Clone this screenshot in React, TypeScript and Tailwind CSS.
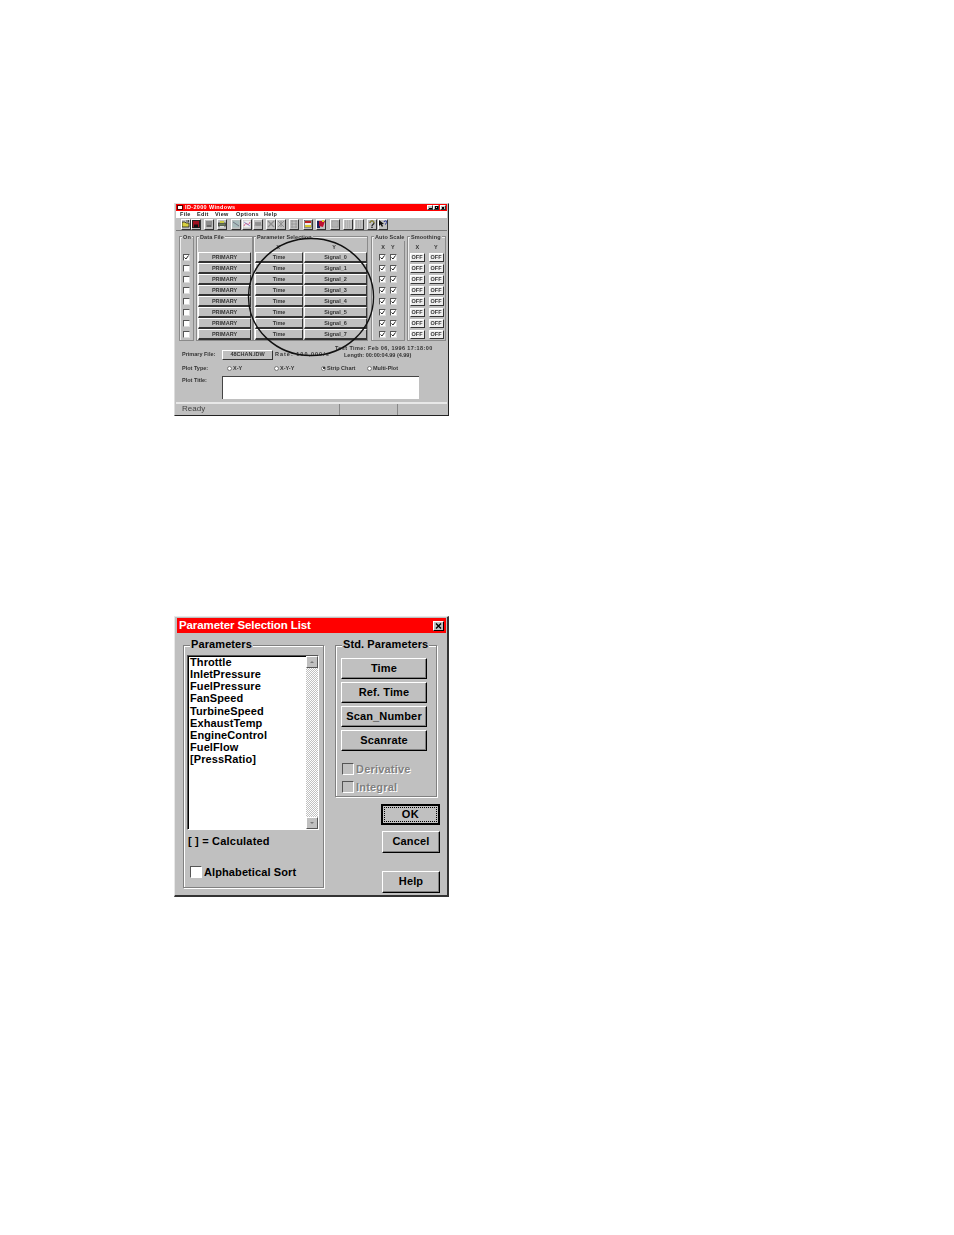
const ui = '[font-family:"Liberation_Sans",Arial,sans-serif]';

const raisedSmall = 'border border-t-white border-l-white border-r-[#333] border-b-[#333] bg-[#c0c0c0]';
const signals = ['Signal_0', 'Signal_1', 'Signal_2', 'Signal_3', 'Signal_4', 'Signal_5', 'Signal_6', 'Signal_7'];
const params = ['Throttle', 'InletPressure', 'FuelPressure', 'FanSpeed', 'TurbineSpeed', 'ExhaustTemp', 'EngineControl', 'FuelFlow', '[PressRatio]'];

const SmallCheck = ({ checked }: { checked?: boolean }) => (
	<div className="w-[7px] h-[7px] bg-white border border-t-[#555] border-l-[#555] border-r-[#ddd] border-b-[#ddd] flex items-center justify-center">
		{checked && (
			<svg width="5" height="5" viewBox="0 0 5 5" className="shrink-0">
				<path d="M0.5 2.5 L2 4 L4.5 0.5" fill="none" stroke="#222" strokeWidth="1" />
			</svg>
		)}
	</div>
);

const SmallGroup = ({ title, className, children }: { title: string; className: string; children?: React.ReactNode }) => (
	<div className={`relative border border-[#8a8a8a] shadow-[inset_1px_1px_0_#eee] ${className}`}>
		<div className="absolute -top-[3px] left-[2px] px-[1px] bg-[#c0c0c0] text-[5.5px] leading-[7px] font-bold tracking-[0.1px] text-[#333] whitespace-nowrap">
			{title}
		</div>
		{children}
	</div>
);

const Radio = ({ label, on, className }: { label: string; on?: boolean; className?: string }) => (
	<div className={`flex items-center gap-[1px] ${className ?? ''}`}>
		<div className="w-[5px] h-[5px] rounded-full bg-white border border-[#777] flex items-center justify-center">
			{on && <div className="w-[2px] h-[2px] rounded-full bg-black" />}
		</div>
		<span>{label}</span>
	</div>
);

const ToolIcon = ({ className, children }: { className?: string; children?: React.ReactNode }) => (
	<div className={`w-[10px] h-[11px] shrink-0 ${raisedSmall} flex items-center justify-center overflow-hidden ${className ?? ''}`}>
		<svg width="8" height="8" viewBox="0 0 8 8">
			{children}
		</svg>
	</div>
);

const Toolbar = () => (
	<div className="h-[13px] flex items-center pl-[5px] border-b border-[#777] bg-[#c0c0c0]">
		<ToolIcon>
			<path d="M0 2 H3 L4 3 H7 V7 H0 Z" fill="#d8d040" stroke="#222" strokeWidth="0.8" />
			<path d="M4 1 L7 1 M6 0 L7 1 L6 2" stroke="#222" strokeWidth="0.7" fill="none" />
		</ToolIcon>
		<ToolIcon>
			<rect x="0.5" y="0.5" width="7" height="7" fill="#a01020" stroke="#222" />
			<rect x="2" y="4.5" width="4" height="3" fill="#111" />
		</ToolIcon>
		<ToolIcon className="ml-[3px]">
			<rect x="1" y="1" width="6" height="6" fill="#8c8c8c" />
			<rect x="2" y="5" width="4" height="2" fill="#666" />
		</ToolIcon>
		<ToolIcon className="ml-[3px]">
			<rect x="0.5" y="3" width="7" height="3" fill="#6c7c60" stroke="#333" strokeWidth="0.7" />
			<rect x="2" y="1" width="4" height="2" fill="#c8c840" />
			<rect x="2" y="6" width="4" height="1.5" fill="#dddddd" />
		</ToolIcon>
		<ToolIcon className="ml-[4px]">
			<rect x="0.5" y="0.5" width="7" height="7" fill="#a8bcbc" />
			<path d="M1 2 L7 6" stroke="#667" strokeWidth="0.8" />
		</ToolIcon>
		<ToolIcon className="ml-[1px]">
			<rect x="0.5" y="0.5" width="7" height="7" fill="#eeeeee" />
			<path d="M1 6 C3 0 5 8 7 2" stroke="#d84070" strokeWidth="0.8" fill="none" />
			<path d="M1 2 L7 6" stroke="#6060c0" strokeWidth="0.6" />
		</ToolIcon>
		<ToolIcon className="ml-[1px]">
			<path d="M1 6 L2 2 L3 6 L4 2 L5 6 L6 2 L7 6" stroke="#808080" strokeWidth="0.8" fill="none" />
		</ToolIcon>
		<ToolIcon className="ml-[3px]">
			<path d="M1 1 L7 7 M7 1 L1 7" stroke="#8c8c8c" strokeWidth="1.2" />
		</ToolIcon>
		<ToolIcon>
			<path d="M1 1 L7 7 M7 1 L1 7 M4 1 V7" stroke="#909090" strokeWidth="1" />
		</ToolIcon>
		<ToolIcon className="ml-[3px]">
			<path d="M1 1 H7 M1 4 H7 M1 7 H7 M2 0 V8 M6 0 V8" stroke="#909090" strokeWidth="0.8" />
		</ToolIcon>
		<ToolIcon className="ml-[4px]">
			<rect x="0.5" y="0.5" width="7" height="7" fill="#eeeeee" stroke="#555" strokeWidth="0.6" />
			<rect x="1" y="1" width="6" height="2" fill="#c02020" />
			<rect x="1" y="5" width="6" height="2" fill="#d8c830" />
		</ToolIcon>
		<ToolIcon className="ml-[3px]">
			<rect x="0" y="1" width="3" height="7" fill="#18205c" />
			<path d="M2 1 L8 1 L6 7 L2 6 Z" fill="#c01030" />
			<rect x="5" y="0" width="2" height="2" fill="#e0d030" />
		</ToolIcon>
		<ToolIcon className="ml-[4px]">
			<rect x="1" y="1" width="6" height="6" fill="none" stroke="#999" />
			<path d="M2 3 H6 M2 5 H6" stroke="#999" strokeWidth="0.7" />
		</ToolIcon>
		<ToolIcon className="ml-[3px]">
			<path d="M1 1 H7 M1 3 H7 M1 5 H7 M1 7 H7" stroke="#999" strokeWidth="0.8" strokeDasharray="1 1" />
		</ToolIcon>
		<ToolIcon className="ml-[1px]">
			<path d="M1 1 H7 M1 3 H7 M1 5 H7 M1 7 H7" stroke="#999" strokeWidth="0.8" strokeDasharray="1 1" />
		</ToolIcon>
		<ToolIcon className="ml-[3px]">
			<path d="M2 3 C2 0 6 0 6 3 C6 4.5 4 4.5 4 6" fill="none" stroke="#222" strokeWidth="1.2" />
			<path d="M2 3 C2 0 6 0 6 3" fill="none" stroke="#d8d030" strokeWidth="0.7" />
			<rect x="3.3" y="6.6" width="1.4" height="1.4" fill="#222" />
		</ToolIcon>
		<ToolIcon className="ml-[1px]">
			<path d="M0 0 V6 L1.5 4.5 L3 7 L4 6 L3 4 H5 Z" fill="#111" />
			<path d="M5 2 C5 0.5 8 0.5 8 2 C8 3 6.5 3 6.5 4.5" fill="none" stroke="#102090" strokeWidth="1" />
		</ToolIcon>
	</div>
);

const MainWindow = () => (
	<div className="relative w-[275px] h-[213px] bg-[#c0c0c0] border-r border-b border-[#222] border-t border-l border-t-[#ddd] border-l-[#ddd] pl-[1px] pr-[1px] blur-[0.4px]">
		<div className="h-[7px] bg-[#ff0000] flex items-center pl-[1px] text-white text-[5.5px] leading-[7px] font-bold tracking-[0.35px]">
			<div className="w-[6px] h-[5px] bg-white border border-[#500] mr-[2px]" />
			<span>ID-2000 Windows</span>
			<div className="ml-auto flex mr-[1px]">
				<div className={`w-[6px] h-[5px] ${raisedSmall} flex items-end justify-center`}>
					<div className="w-[3px] h-[1px] bg-black" />
				</div>
				<div className={`w-[6px] h-[5px] ${raisedSmall} flex items-center justify-center`}>
					<div className="w-[3px] h-[3px] border border-black" />
				</div>
				<div className={`w-[6px] h-[5px] ml-[1px] ${raisedSmall} flex items-center justify-center`}>
					<div className="w-[2px] h-[2px] bg-black" />
				</div>
			</div>
		</div>
		<div className="h-[7px] bg-white flex items-center pl-[4px] text-[5.5px] leading-[7px] font-bold tracking-[0.3px] text-[#222]">
			<span className="w-[17px]">File</span>
			<span className="w-[18px]">Edit</span>
			<span className="w-[21px]">View</span>
			<span className="w-[28px]">Options</span>
			<span>Help</span>
		</div>
		<Toolbar />

		<div className="flex mt-[5px] pl-[3px] h-[110px]">
			<SmallGroup title="On" className="w-[15px] h-[105px] mr-[2px]">
				<div className="mt-[15px] flex flex-col items-center">
					{signals.map((_, i) => (
						<div key={i} className="h-[11px] flex items-center">
							<SmallCheck checked={i === 0} />
						</div>
					))}
				</div>
			</SmallGroup>
			<SmallGroup title="Data File" className="w-[57px] h-[105px]">
				<div className="mt-[15px] pl-[1px] pr-[1px] flex flex-col">
					{signals.map((_, i) => (
						<div key={i} className={`h-[11px] ${raisedSmall} border-b-2 flex items-center justify-center text-[5.5px] font-bold text-[#333]`}>
							PRIMARY
						</div>
					))}
				</div>
			</SmallGroup>
			<SmallGroup title="Parameter Selection" className="w-[115px] h-[105px] mr-[3px]">
				<div className="flex mt-[6px] h-[9px] text-[5.5px] leading-[9px] font-bold text-[#333] text-center">
					<span className="w-[48px]">X</span>
					<span className="w-[64px]">Y</span>
				</div>
				<div className="flex flex-col pl-[1px]">
					{signals.map((name) => (
						<div key={name} className="h-[11px] flex text-[5.5px] font-bold text-[#333]">
							<div className={`w-[48px] ${raisedSmall} border-b-2 flex items-center justify-center`}>Time</div>
							<div className={`w-[63px] ml-[1px] ${raisedSmall} border-b-2 flex items-center justify-center`}>{name}</div>
						</div>
					))}
				</div>
			</SmallGroup>
			<SmallGroup title="Auto Scale" className="w-[34px] h-[105px] mr-[2px]">
				<div className="flex mt-[6px] h-[9px] justify-center gap-[6px] text-[5.5px] leading-[9px] font-bold text-[#333]">
					<span>X</span>
					<span>Y</span>
				</div>
				{signals.map((name) => (
					<div key={name} className="h-[11px] flex items-center justify-center gap-[4px]">
						<SmallCheck checked />
						<SmallCheck checked />
					</div>
				))}
			</SmallGroup>
			<SmallGroup title="Smoothing" className="w-[39px] h-[105px]">
				<div className="flex mt-[6px] h-[9px] justify-around text-[5.5px] leading-[9px] font-bold text-[#333]">
					<span>X</span>
					<span>Y</span>
				</div>
				{signals.map((name) => (
					<div key={name} className="h-[11px] flex items-center justify-center gap-[4px]">
						<div className={`w-[15px] h-[9px] ${raisedSmall} bg-[#eee] border-r-[#222] border-b-[#222] text-[5.5px] leading-[7px] font-bold text-center text-[#333]`}>OFF</div>
						<div className={`w-[15px] h-[9px] ${raisedSmall} bg-[#eee] border-r-[#222] border-b-[#222] text-[5.5px] leading-[7px] font-bold text-center text-[#333]`}>OFF</div>
					</div>
				))}
			</SmallGroup>
		</div>

		<div className="h-[17px] flex items-center pl-[6px] text-[5.5px] font-bold text-[#333]">
			<span className="w-[40px]">Primary File:</span>
			<div className={`w-[51px] h-[10px] ${raisedSmall} flex items-center justify-center`}>48CHAN.IDW</div>
			<span className="ml-[2px] w-[60px] tracking-[1px] whitespace-nowrap">Rate: 100,000/s</span>
			<div className="-mt-[6px] leading-[7px] whitespace-nowrap">
				<div className="tracking-[0.4px]">Test Time: Feb 06, 1996 17:18:00</div>
				<div className="pl-[9px]">Length: 00:00:04.99 (4.99)</div>
			</div>
		</div>
		<div className="h-[10px] flex items-center pl-[6px] text-[5.5px] font-bold text-[#333]">
			<span className="w-[45px]">Plot Type:</span>
			<Radio label="X-Y" className="w-[47px]" />
			<Radio label="X-Y-Y" className="w-[47px]" />
			<Radio label="Strip Chart" on className="w-[46px]" />
			<Radio label="Multi-Plot" />
		</div>
		<div className="flex pl-[6px] mt-[3px] text-[5.5px] font-bold text-[#333]">
			<span className="w-[40px]">Plot Title:</span>
			<div className="w-[197px] h-[23px] bg-white border-l border-t border-[#444]" />
		</div>
		<div className="absolute bottom-0 left-[1px] right-[1px] h-[13px] border-t-2 border-[#e8e8e8] flex text-[8px] leading-[9px] text-[#444]">
			<span className="w-[164px] pl-[6px] border-r border-[#888]">Ready</span>
			<span className="w-[58px] border-r border-[#888]" />
		</div>
		<svg className="absolute left-[72px] top-[33px] pointer-events-none" width="128" height="120" viewBox="0 0 128 120">
			<ellipse cx="64" cy="60" rx="62.5" ry="58.5" fill="none" stroke="#111" strokeWidth="1.4" />
		</svg>
	</div>
);

const Raised = ({ className, children }: { className: string; children: React.ReactNode }) => (
	<div className={`border border-t-white border-l-white border-r-black border-b-black shadow-[inset_-1px_-1px_0_#808080] flex items-center justify-center text-[11px] font-bold tracking-[0.15px] text-black ${className}`}>
		{children}
	</div>
);

const GroupBox = ({ title, className, children }: { title: string; className: string; children: React.ReactNode }) => (
	<div className={`relative border border-[#808080] shadow-[1px_1px_0_#fff,inset_1px_1px_0_#fff] ${className}`}>
		<div className="absolute -top-[9px] left-[6px] px-[1px] bg-[#c0c0c0] text-[11px] leading-[14px] font-bold tracking-[0.1px] text-black whitespace-nowrap">
			{title}
		</div>
		{children}
	</div>
);

const Check = ({ disabled }: { disabled?: boolean }) => (
	<div className={`w-[12px] h-[12px] border ${disabled ? 'bg-[#c0c0c0]' : 'bg-white'} border-t-[#555] border-l-[#555] border-r-white border-b-white`} />
);

const ScrollBtn = ({ up }: { up?: boolean }) => (
	<div className="h-[12px] w-[12px] bg-[#c0c0c0] border border-t-white border-l-white border-r-[#555] border-b-[#555] flex items-center justify-center">
		<div className={`w-0 h-0 border-l-[2px] border-r-[2px] border-transparent ${up ? 'border-b-[2px] border-b-[#777]' : 'border-t-[2px] border-t-[#777]'}`} />
	</div>
);

const DialogWindow = () => (
	<div className="w-[275px] h-[281px] bg-[#c0c0c0] border-t border-l border-t-[#e8e8e8] border-l-[#e8e8e8] border-r-2 border-b-2 border-r-[#333] border-b-[#333] pl-[2px] pr-[1px] pt-[1px]">
		<div className="h-[15px] w-[269px] bg-[#ff0000] flex items-center pl-[2px] pr-[2px] text-white text-[11.5px] leading-[15px] font-bold tracking-[-0.1px]">
			<span>Parameter Selection List</span>
			<div className="ml-auto w-[11px] h-[10px] bg-[#c0c0c0] border border-t-white border-l-white border-r-black border-b-black flex items-center justify-center">
				<svg width="7" height="6" viewBox="0 0 7 6">
					<path d="M1 0.5 L6 5.5 M6 0.5 L1 5.5" stroke="#000" strokeWidth="1.4" fill="none" />
				</svg>
			</div>
		</div>
		<div className="flex pl-[6px] pt-[12px]">
			<GroupBox title="Parameters" className="w-[141px] h-[243px] pl-[3px] pt-[9px]">
				<div className="w-[132px] h-[175px] bg-white border border-t-[#555] border-l-[#555] border-r-white border-b-white shadow-[inset_1px_1px_0_#000] flex">
					<div className="flex-1 pl-[2px] text-[11px] leading-[12.125px] font-bold tracking-[0.1px] text-black">
						{params.map((p) => (
							<div key={p}>{p}</div>
						))}
					</div>
					<div className="w-[12px] flex flex-col justify-between bg-[repeating-conic-gradient(#c0c0c0_0_25%,#fff_0_50%)] bg-[length:2px_2px]">
						<ScrollBtn up />
						<ScrollBtn />
					</div>
				</div>
				<div className="mt-[4px] pl-[1px] text-[11px] leading-[14px] font-bold tracking-[0.2px] text-black">[ ] = Calculated</div>
				<div className="mt-[17px] pl-[3px] flex items-center gap-[2px] text-[11px] leading-[14px] font-bold tracking-[0.1px] text-black">
					<Check />
					<span>Alphabetical Sort</span>
				</div>
			</GroupBox>
			<div className="ml-[11px] w-[104px]">
				<GroupBox title="Std. Parameters" className="w-[102px] h-[152px] pl-[5px] pt-[12px]">
					<div className="flex flex-col gap-[3px] w-[86px]">
						<Raised className="h-[21px]">Time</Raised>
						<Raised className="h-[21px]">Ref. Time</Raised>
						<Raised className="h-[21px]">Scan_Number</Raised>
						<Raised className="h-[21px]">Scanrate</Raised>
					</div>
					<div className="mt-[11px] pl-[1px] flex items-center gap-[2px] h-[14px] text-[11px] font-bold tracking-[0.2px] text-[#808080] [text-shadow:1px_1px_0_#fff]">
						<Check disabled />
						<span>Derivative</span>
					</div>
					<div className="mt-[4px] pl-[1px] flex items-center gap-[2px] h-[14px] text-[11px] font-bold tracking-[0.2px] text-[#808080] [text-shadow:1px_1px_0_#fff]">
						<Check disabled />
						<span>Integral</span>
					</div>
				</GroupBox>
				<div className="flex flex-col items-end mt-[7px] mr-[-1px]">
					<div className="w-[59px] h-[21px] border-2 border-black flex items-center justify-center p-[1px]">
						<div className="w-full h-full border border-dotted border-black flex items-center justify-center text-[11px] font-bold tracking-[0.6px] text-black">OK</div>
					</div>
					<Raised className="w-[58px] h-[22px] mt-[6px] pb-[2px]">Cancel</Raised>
					<Raised className="w-[58px] h-[22px] mt-[18px] pb-[2px]">Help</Raised>
				</div>
			</div>
		</div>
	</div>
);

export default function App() {
	return (
		<div className={`relative w-[954px] h-[1235px] bg-white ${ui} pl-[174px] pt-[203px]`}>
			<MainWindow />
			<div className="mt-[200px]">
				<DialogWindow />
			</div>
		</div>
	);
}
